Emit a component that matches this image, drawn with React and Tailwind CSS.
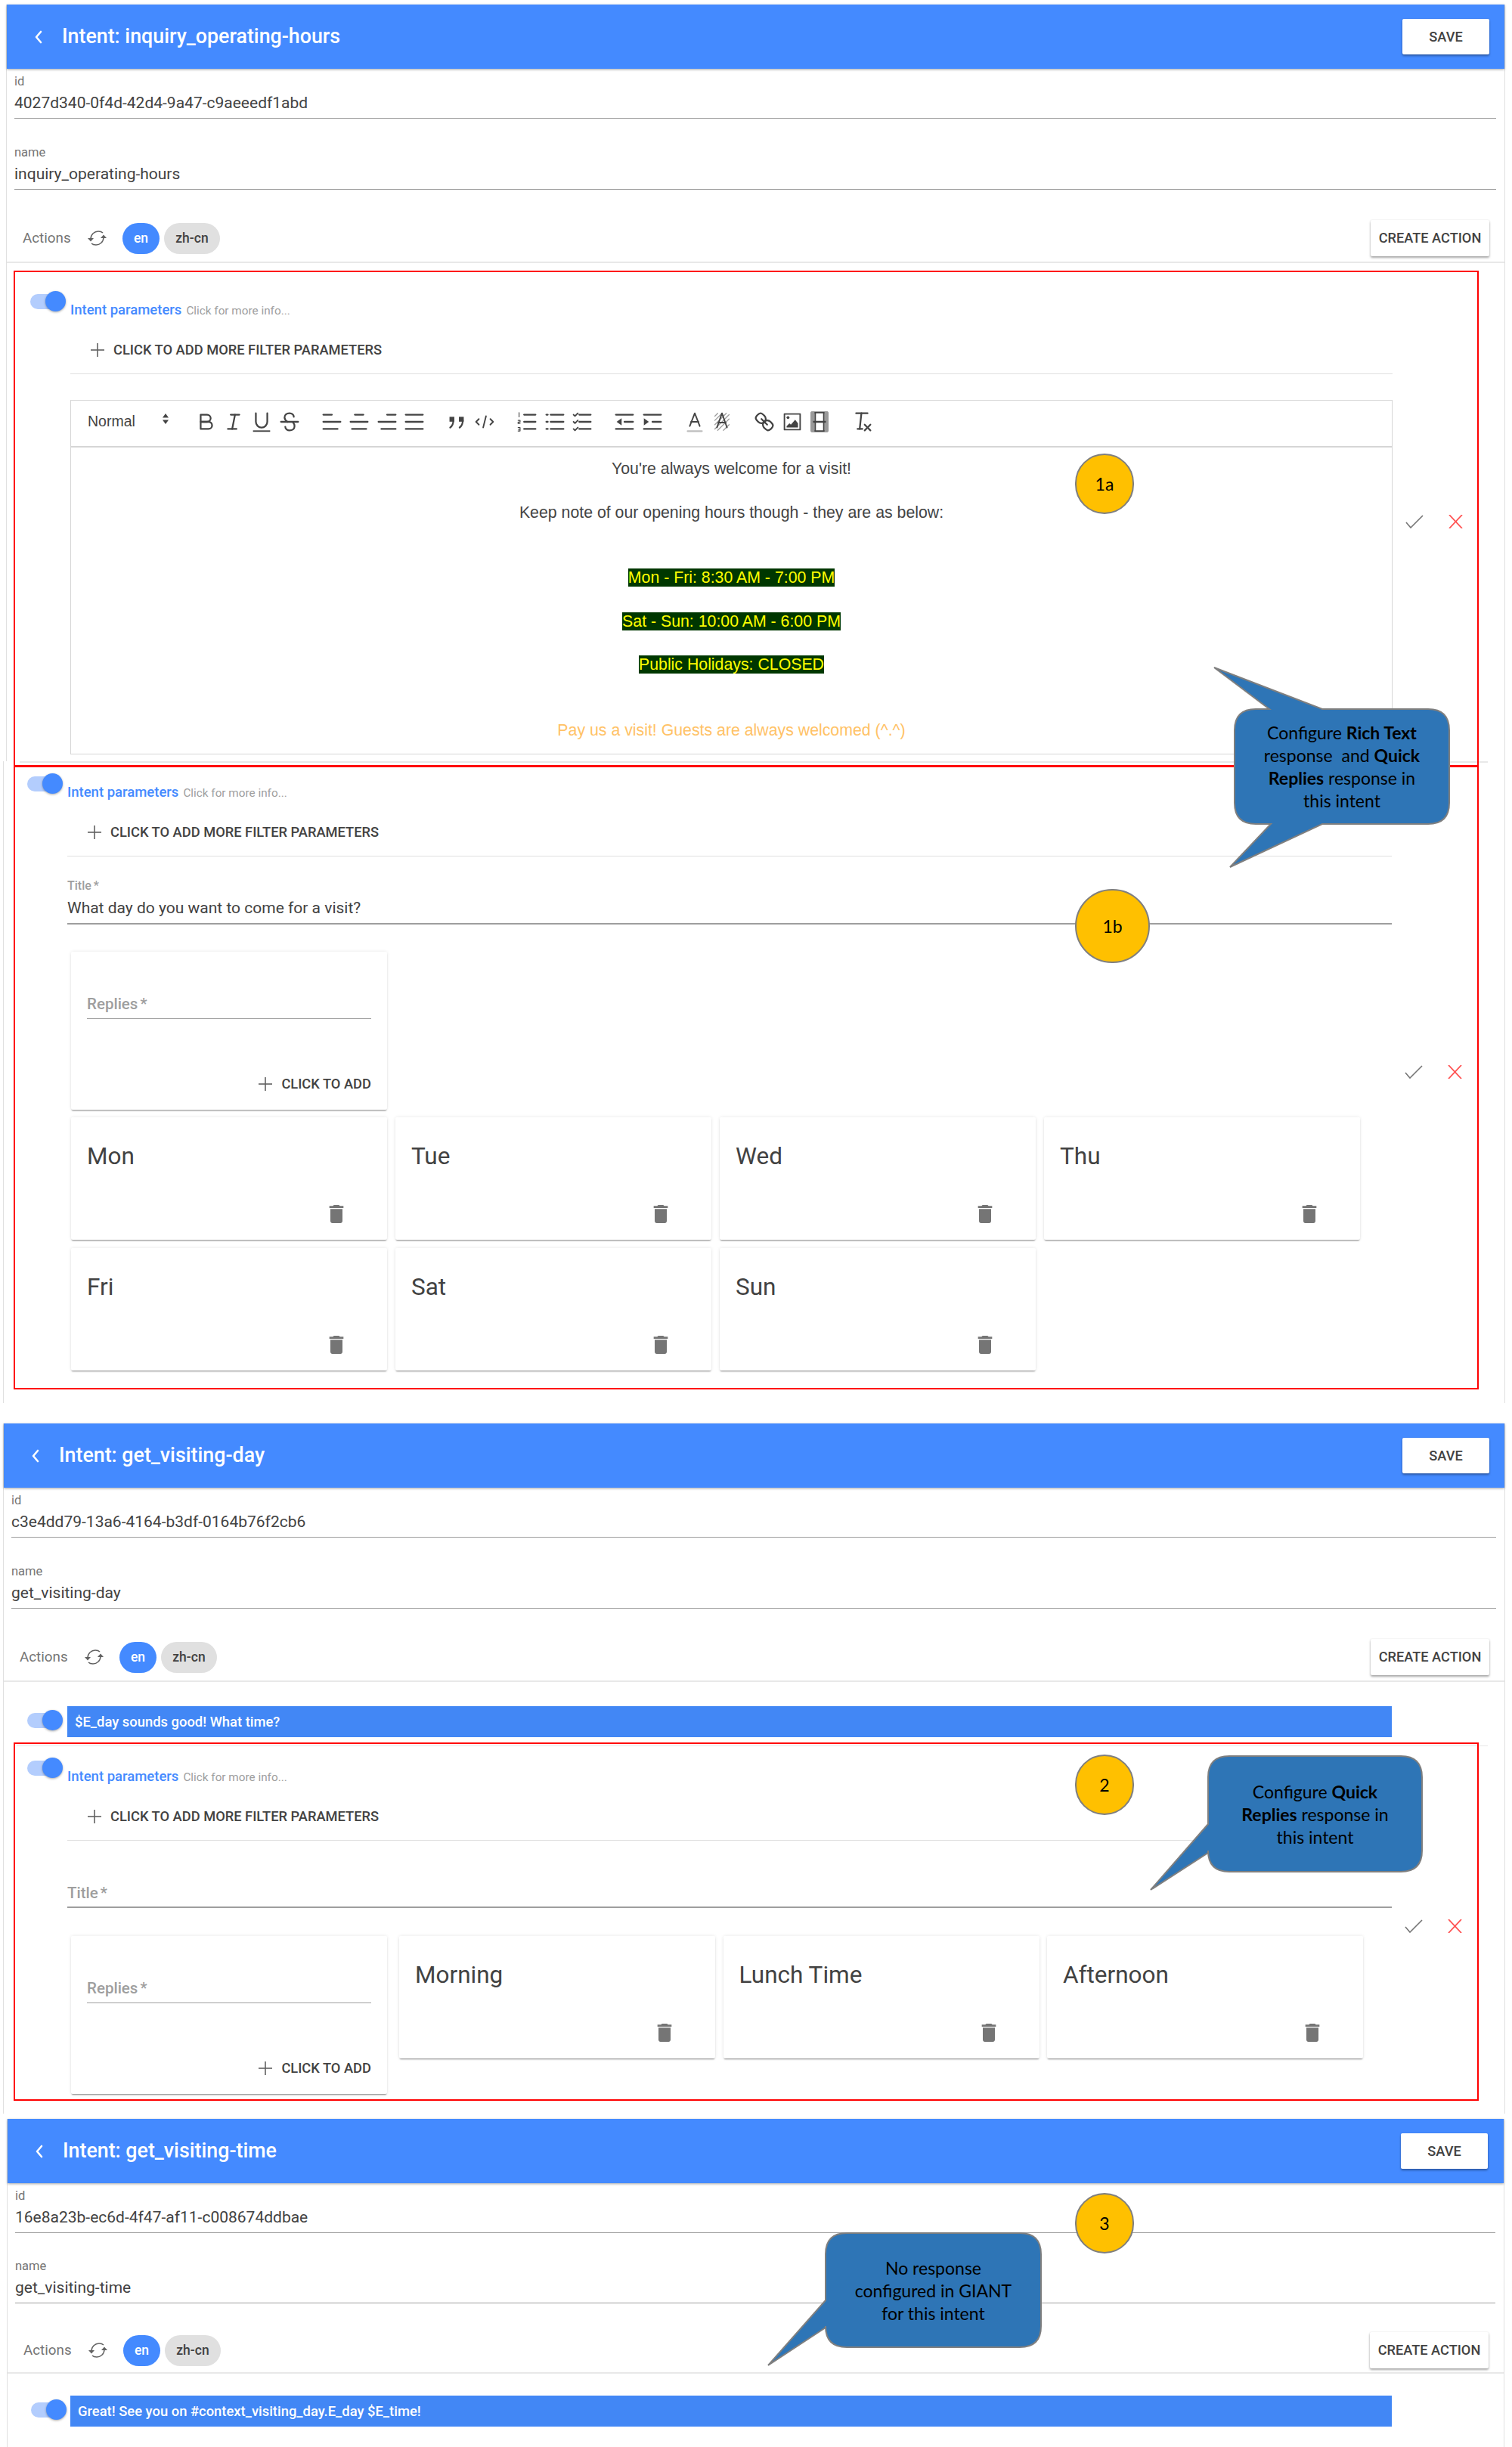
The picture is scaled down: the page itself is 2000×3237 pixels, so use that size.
const Chevron = () => (
  <svg width="14" height="20" viewBox="0 0 14 20" fill="none" stroke="#fff" strokeWidth="2.6" strokeLinecap="round" strokeLinejoin="round">
    <polyline points="10,3 4,10 10,17" />
  </svg>
);

const Plus = () => (
  <svg width="18" height="18" viewBox="0 0 18 18" stroke="#616161" strokeWidth="1.6" className="shrink-0">
    <line x1="9" y1="0" x2="9" y2="18" />
    <line x1="0" y1="9" x2="18" y2="9" />
  </svg>
);

const Refresh = () => (
  <svg width="27" height="22" viewBox="0 0 27 22" fill="none" stroke="#616161" strokeWidth="1.5" className="shrink-0">
    <path d="M5 12C5 6 10 2 15 2c3 0 5 1 6 2" />
    <path d="M22 10c0 6-5 10-10 10-3 0-5-1-6-2" />
    <path d="M1 11h8l-4 4.5z" fill="#616161" stroke="none" />
    <path d="M18 11h8l-4-4.5z" fill="#616161" stroke="none" />
  </svg>
);

const Trash = () => (
  <svg width="32" height="32" viewBox="0 0 24 24" fill="#757575">
    <path d="M6 19c0 1.1.9 2 2 2h8c1.1 0 2-.9 2-2V7H6v12zM19 4h-3.5l-1-1h-5l-1 1H5v2h14V4z" />
  </svg>
);

const Check = () => (
  <svg width="24" height="18" viewBox="0 0 24 18" fill="none" stroke="#757575" strokeWidth="1.6">
    <polyline points="1,10 7,17 23,1" />
  </svg>
);

const Cross = () => (
  <svg width="19" height="18" viewBox="0 0 19 18" fill="none" stroke="#ff5252" strokeWidth="1.8">
    <line x1="1" y1="0" x2="18" y2="18" />
    <line x1="18" y1="0" x2="1" y2="18" />
  </svg>
);

const Toggle = () => (
  <div className="relative w-[47px] h-[27px]">
    <div className="absolute left-0 top-[4px] w-[38px] h-[20px] rounded-full bg-[#b3cdfd]" />
    <div className="absolute right-0 top-0 w-[27px] h-[27px] rounded-full bg-[#448aff] shadow-[0_1px_3px_rgba(0,0,0,0.35)]" />
  </div>
);

const Btn = ({ children, className }) => (
  <div className={`flex items-center justify-center bg-white rounded-[2px] text-[18.2px] font-medium text-[#424242] shadow-[0_2px_3px_rgba(0,0,0,0.35),0_0_2px_rgba(0,0,0,0.1)] ${className}`}>
    {children}
  </div>
);

const Header = ({ title, right = "pr-[20px]" }) => (
  <div className={`flex items-center h-[85px] pl-[35px] bg-[#448aff] shadow-[0_1px_3px_rgba(0,0,0,0.35)] ${right}`}>
    <Chevron />
    <div className="ml-[24px] text-[26.8px] font-medium text-white">{title}</div>
    <Btn className="ml-auto w-[115px] h-[47px]">SAVE</Btn>
  </div>
);

const Field = ({ label, value }) => (
  <div className="border-b border-[#9e9e9e] pb-[7px]">
    <div className="h-[16px] text-[16.5px] leading-[16px] text-[#757575]">{label}</div>
    <div className="mt-[7px] h-[26px] text-[21px] leading-[26px] text-[#424242]">{value}</div>
  </div>
);

const Meta = ({ id, name, tight }) => (
  <>
    <div className="pl-[10px] pr-[11px] pt-[9px]">
      <Field label="id" value={id} />
      <div className={tight ? "mt-[36px]" : "mt-[37px]"}>
        <Field label="name" value={name} />
      </div>
    </div>
    <div className={`flex items-center h-[48px] pl-[21px] pr-[20px] ${tight ? "mt-[38px]" : "mt-[40px]"}`}>
      <span className="w-[63px] text-[18.8px] text-[#757575]">Actions</span>
      <div className="ml-[22px] mr-[20px]"><Refresh /></div>
      <div className="flex items-center justify-center w-[49px] h-[41px] rounded-full bg-[#448aff] text-[17.5px] font-medium text-white">en</div>
      <div className="flex items-center justify-center ml-[6px] w-[74px] h-[41px] rounded-full bg-[#e0e0e0] text-[17.5px] font-medium text-[#424242]">zh-cn</div>
      <Btn className="ml-auto w-[157px] h-[48px]">CREATE ACTION</Btn>
    </div>
    <div className={`h-[2px] bg-[#e8e8e8] ${tight ? "mt-[5px]" : "mt-[7px]"}`} />
  </>
);

const IntentParams = () => (
  <>
    <div className="flex items-baseline gap-[6px] mt-[14px] h-[22px] leading-[22px]">
      <span className="text-[18.5px] font-medium text-[#448aff]">Intent parameters</span>
      <span className="text-[15.3px] text-[#9e9e9e]">Click for more info...</span>
    </div>
    <div className="flex items-center h-[40px] mt-[22px] pl-[27px]">
      <Plus />
      <span className="ml-[12px] text-[18.3px] font-medium text-[#424242]">CLICK TO ADD MORE FILTER PARAMETERS</span>
    </div>
    <div className="mt-[11px] h-[1px] bg-[#e0e0e0]" />
  </>
);

const Block = ({ width, actions, children }) => (
  <div className="flex">
    <div className="w-[84px] pl-[31px]"><Toggle /></div>
    <div className={width}>
      <IntentParams />
      {children}
    </div>
    <div className={`flex items-start ml-[17px] gap-[33px] ${actions}`}>
      <Check />
      <Cross />
    </div>
  </div>
);

const ReplyCard = ({ text }) => (
  <div className="flex flex-col w-[418px] h-[162px] px-[21px] pt-[34px] bg-white rounded-[2px] shadow-[0_2px_2px_-1px_rgba(0,0,0,0.45),0_0_4px_rgba(0,0,0,0.1)]">
    <div className="h-[36px] text-[31.5px] leading-[36px] text-[#424242]">{text}</div>
    <div className="flex justify-end mt-[42px] pr-[30px]"><Trash /></div>
  </div>
);

const RepliesCard = () => (
  <div className="w-[418px] h-[209px] shrink-0 px-[21px] pt-[54px] bg-white rounded-[2px] shadow-[0_2px_2px_-1px_rgba(0,0,0,0.45),0_0_4px_rgba(0,0,0,0.1)]">
    <div className="h-[35px] pb-[4px] border-b border-[#9e9e9e] text-[20.5px] leading-[30px] font-medium text-[#9e9e9e]">Replies<span className="ml-[3px]">*</span></div>
    <div className="flex items-center justify-end h-[32px] mt-[70px]">
      <Plus />
      <span className="ml-[12px] text-[18.3px] font-medium text-[#424242]">CLICK TO ADD</span>
    </div>
  </div>
);

const icons = [
  [<><path d="M5 4h4.5a2.5 2.5 0 0 1 0 5H5z" /><path d="M5 9h5.5a2.5 2.5 0 0 1 0 5H5z" /></>,
   <><line x1="7" x2="13" y1="4" y2="4" /><line x1="5" x2="11" y1="14" y2="14" /><line x1="8" x2="10" y1="14" y2="4" /></>,
   <><path d="M5 3v6a4 4 0 0 0 4 4 4 4 0 0 0 4-4V3" /><rect x="3" y="15" width="12" height="1" fill="#444" stroke="none" /></>,
   <><line x1="3" x2="15" y1="9" y2="9" /><path d="M12 5.5C12 4 10.5 3 9 3 7 3 5.5 4.2 5.5 6c0 1.2.8 2.2 2 3" /><path d="M6 12.5c0 1.5 1.5 2.5 3 2.5 2 0 3.5-1.2 3.5-3 0-1-.4-1.9-1-2.5" /></>],
  [<><line x1="3" x2="15" y1="9" y2="9" /><line x1="3" x2="13" y1="14" y2="14" /><line x1="3" x2="9" y1="4" y2="4" /></>,
   <><line x1="3" x2="15" y1="9" y2="9" /><line x1="4" x2="14" y1="14" y2="14" /><line x1="6" x2="12" y1="4" y2="4" /></>,
   <><line x1="3" x2="15" y1="9" y2="9" /><line x1="5" x2="15" y1="14" y2="14" /><line x1="9" x2="15" y1="4" y2="4" /></>,
   <><line x1="3" x2="15" y1="9" y2="9" /><line x1="3" x2="15" y1="14" y2="14" /><line x1="3" x2="15" y1="4" y2="4" /></>],
  [<><rect x="4" y="5.5" width="3.4" height="3.4" fill="#444" stroke="none" /><rect x="10.6" y="5.5" width="3.4" height="3.4" fill="#444" stroke="none" /><path d="M6.7 8c0 2.5-.7 4-2.2 5" /><path d="M13.3 8c0 2.5-.7 4-2.2 5" /></>,
   <><polyline points="5 7 3 9 5 11" strokeWidth="1" /><polyline points="13 7 15 9 13 11" strokeWidth="1" /><line x1="10" x2="8" y1="5" y2="13" strokeWidth="1" /></>],
  [<><line x1="7" x2="15" y1="4" y2="4" /><line x1="7" x2="15" y1="9" y2="9" /><line x1="7" x2="15" y1="14" y2="14" /><path d="M3.5 2.5v3M2.8 8h1.4v1.2H2.8v1h1.4M2.8 13h1.4v2.4H2.8M3 14.2h1" strokeWidth="0.6" /></>,
   <><line x1="6" x2="15" y1="4" y2="4" /><line x1="6" x2="15" y1="9" y2="9" /><line x1="6" x2="15" y1="14" y2="14" /><line x1="3" x2="4" y1="4" y2="4" /><line x1="3" x2="4" y1="9" y2="9" /><line x1="3" x2="4" y1="14" y2="14" /></>,
   <><line x1="7" x2="15" y1="4" y2="4" /><line x1="7" x2="15" y1="9" y2="9" /><line x1="7" x2="15" y1="14" y2="14" /><polyline points="3 4 4 5 6 3" strokeWidth="1" /><polyline points="3 9 4 10 6 8" strokeWidth="1" /><polyline points="3 14 4 15 6 13" strokeWidth="1" /></>],
  [<><line x1="3" x2="15" y1="14" y2="14" /><line x1="3" x2="15" y1="4" y2="4" /><line x1="9" x2="15" y1="9" y2="9" /><polygon points="7 6.5 7 11.5 3.5 9" fill="#444" stroke="none" /></>,
   <><line x1="3" x2="15" y1="14" y2="14" /><line x1="3" x2="15" y1="4" y2="4" /><line x1="9" x2="15" y1="9" y2="9" /><polygon points="3 6.5 3 11.5 6.5 9" fill="#444" stroke="none" /></>],
  [<><line x1="4" x2="14" y1="15.5" y2="15.5" stroke="#bdbdbd" /><polyline points="5.5 12 9 3 12.5 12" strokeWidth="1" /><line x1="11.6" x2="6.4" y1="9" y2="9" strokeWidth="1" /></>,
   <><path d="M4 5l2-2M4 8l5-5M4 11l8-8M4 14l10-10M6 15l8-8M10 15l4-4" stroke="#9e9e9e" strokeWidth="0.7" /><polyline points="5.5 13 9 3 12.5 13" strokeWidth="1" /><line x1="11.6" x2="6.4" y1="9.5" y2="9.5" strokeWidth="1" /></>],
  [<><line x1="7" x2="11" y1="7" y2="11" /><path d="M8.9 4.6a3.5 3.5 0 0 1 .4 4.7 3.5 3.5 0 0 1-4.7-.4C3.2 7.5 2 6.4 4.2 4.2S7.5 3.2 8.9 4.6z" /><path d="M13.4 9.1a3.5 3.5 0 0 0-4.7-.4 3.5 3.5 0 0 0 .4 4.7c1.4 1.4 2.5 2.5 4.7.4s1.1-3.3-.4-4.7z" /></>,
   <><rect x="3.5" y="3.5" width="11" height="11" strokeWidth="1" /><circle cx="6" cy="6" r="1" fill="#444" stroke="none" /><polygon points="5 13 5 12 7 10 8 11 11 7.5 13 10 13 13" fill="#444" stroke="none" /></>,
   <><rect x="3.5" y="2.5" width="11" height="13" strokeWidth="1.2" /><rect x="3" y="2" width="2.5" height="14" fill="#999" stroke="none" /><rect x="12.5" y="2" width="2.5" height="14" fill="#999" stroke="none" /><line x1="5" x2="13" y1="9" y2="9" /><line x1="6" x2="6" y1="3" y2="15" strokeWidth="1" /><line x1="12" x2="12" y1="3" y2="15" strokeWidth="1" /></>],
  [<><line x1="5" x2="13" y1="3" y2="3" /><line x1="6" x2="9.4" y1="14" y2="14" /><line x1="8.7" x2="7.5" y1="3" y2="14" /><line x1="11" x2="15" y1="11" y2="15" /><line x1="15" x2="11" y1="11" y2="15" /></>],
];

const Toolbar = () => (
  <div className="flex items-center h-[62px] border-b-2 border-[#d6d6d6] pl-[22px] pb-[4px]">
    <span className="relative w-[103px] text-[19.5px] text-[#444] [font-family:'Liberation_Sans',sans-serif]">
      Normal
      <svg width="10" height="16" viewBox="0 0 10 16" fill="#444" className="absolute left-[98px] top-[3px]">
        <polygon points="5,1 9,6.5 1,6.5" />
        <polygon points="5,15 9,9.5 1,9.5" />
      </svg>
    </span>
    <div className="flex ml-[35.5px]">
      {icons.map((group, i) => (
        <div key={i} className="flex mr-[19.4px]">
          {group.map((icon, j) => (
            <div key={j} className="flex justify-center w-[36.6px]">
              <svg width="34" height="34" viewBox="0 0 18 18" fill="none" stroke="#444" strokeWidth="1.2" strokeLinecap="round" strokeLinejoin="round">
                {icon}
              </svg>
            </div>
          ))}
        </div>
      ))}
    </div>
  </div>
);

const Line = ({ children, className = "" }) => (
  <p className={`h-[28.8px] ${className}`}>{children}</p>
);

const Hours = ({ children }) => (
  <Line><span className="bg-[#003700] text-[#ffff00]">{children}</span></Line>
);

const Editor = () => (
  <div className="mt-[34px] h-[469px] border border-[#d6d6d6]">
    <Toolbar />
    <div className="pt-[14px] text-center text-[21.3px] leading-[28.8px] text-[#444] [font-family:'Liberation_Sans',sans-serif]">
      <Line>You're always welcome for a visit!</Line>
      <Line />
      <Line>Keep note of our opening hours though - they are as below:</Line>
      <Line />
      <Line />
      <Hours>Mon - Fri: 8:30 AM - 7:00 PM</Hours>
      <Line />
      <Hours>Sat - Sun: 10:00 AM - 6:00 PM</Hours>
      <Line />
      <Hours>Public Holidays: CLOSED</Hours>
      <Line />
      <Line />
      <Line className="text-[#ffc266]">Pay us a visit! Guests are always welcomed (^.^)</Line>
    </div>
  </div>
);

const Bar = ({ col, width, text }) => (
  <div className="flex">
    <div className={`${col} pl-[31px] pt-[5px]`}><Toggle /></div>
    <div className={`${width} flex items-center h-[41px] pl-[10px] bg-[#4287f5] text-[18.4px] font-medium text-white`}>{text}</div>
  </div>
);

const Circle = ({ className, children }) => (
  <div className={`absolute flex items-center justify-center rounded-full bg-[#ffc000] border-2 border-[#7f7f7f] text-[23px] text-black [font-family:Lato,sans-serif] ${className}`}>
    {children}
  </div>
);

const Callout = ({ box, d, view, textBox, children }) => (
  <>
    <svg className={`absolute overflow-visible ${box}`} viewBox={view} fill="#2e75b6" stroke="#7f7f7f" strokeWidth="2">
      <path d={d} />
    </svg>
    <div className={`absolute flex flex-col items-center justify-center text-[23px] leading-[30px] text-black [font-family:Lato,sans-serif] ${textBox}`}>
      {children}
    </div>
  </>
);

export default function App() {
  return (
    <div className="relative w-[2000px] h-[3237px] overflow-hidden bg-white [font-family:Roboto,sans-serif]">
      {/* intent 1, top half */}
      <div className="ml-[8px] mt-[6px] w-[1983px] h-[1001px] border-x border-[#e0e0e0]">
        <Header title="Intent: inquiry_operating-hours" />
        <Meta id="4027d340-0f4d-42d4-9a47-c9aeeedf1abd" name="inquiry_operating-hours" />
        <div className="pt-[37px]">
          <Block width="w-[1749px]" actions="pt-[296px]">
            <Editor />
          </Block>
        </div>
        <div className="ml-[17px] mt-[9px] w-[1942px] h-[2px] bg-[#e8e8e8]" />
      </div>

      {/* intent 1, quick replies */}
      <div className="ml-[4px] w-[1987px] pt-[16px] pb-[43px] border-x border-[#e0e0e0]">
        <Block width="w-[1752px]" actions="pt-[386px]">
          <div className="mt-[31px] border-b-2 border-[#9e9e9e] pb-[7px]">
            <div className="h-[16px] text-[16px] leading-[16px] font-medium text-[#9e9e9e]">Title<span className="ml-[3px]">*</span></div>
            <div className="mt-[8px] h-[26px] text-[21px] leading-[26px] text-[#424242]">What day do you want to come for a visit?</div>
          </div>
          <div className="ml-[5px] mt-[36px]">
            <RepliesCard />
            <div className="grid grid-cols-[repeat(4,418px)] gap-x-[11px] gap-y-[11px] mt-[10px]">
              {["Mon", "Tue", "Wed", "Thu", "Fri", "Sat", "Sun"].map((d) => (
                <ReplyCard key={d} text={d} />
              ))}
            </div>
          </div>
        </Block>
      </div>

      {/* intent 2 */}
      <div className="ml-[4px] mt-[27px] w-[1987px] h-[913px] border-x border-[#e0e0e0]">
        <Header title="Intent: get_visiting-day" />
        <Meta id="c3e4dd79-13a6-4164-b3df-0164b76f2cb6" name="get_visiting-day" />
        <div className="mt-[32px]">
          <Bar col="w-[84px]" width="w-[1752px]" text="$E_day sounds good! What time?" />
        </div>
        <div className="ml-[17px] mt-[11px] w-[1946px] h-[1px] bg-[#e8e8e8]" />
        <div className="pt-[15px]">
          <Block width="w-[1752px]" actions="pt-[214px]">
            <div className="mt-[54px] h-[35px] border-b-2 border-[#9e9e9e] text-[20.5px] leading-[30px] font-medium text-[#9e9e9e]">Title<span className="ml-[3px]">*</span></div>
            <div className="flex items-start ml-[5px] mt-[37px]">
              <RepliesCard />
              <div className="flex gap-[10.5px] ml-[16px]">
                {["Morning", "Lunch Time", "Afternoon"].map((d) => (
                  <ReplyCard key={d} text={d} />
                ))}
              </div>
            </div>
          </Block>
        </div>
      </div>

      {/* intent 3 */}
      <div className="ml-[9px] mt-[7px] w-[1981px] h-[434px] border-x border-[#e0e0e0]">
        <Header title="Intent: get_visiting-time" right="pr-[21px]" />
        <Meta id="16e8a23b-ec6d-4f47-af11-c008674ddbae" name="get_visiting-time" tight />
        <div className="mt-[29px]">
          <Bar col="w-[83px]" width="w-[1748px]" text="Great! See you on #context_visiting_day.E_day $E_time!" />
        </div>
      </div>

      {/* annotations drawn on top of the screenshots */}
      <div className="absolute left-[18px] top-[358px] w-[1938px] h-[656px] border-2 border-[#ff0000]" />
      <div className="absolute left-[18px] top-[1013px] w-[1938px] h-[825px] border-2 border-[#ff0000]" />
      <div className="absolute left-[18px] top-[2305px] w-[1938px] h-[474px] border-2 border-[#ff0000]" />

      <Circle className="left-[1422px] top-[600px] w-[78px] h-[80px]">1a</Circle>
      <Circle className="left-[1422px] top-[1176px] w-[99px] h-[98px]">1b</Circle>
      <Circle className="left-[1422px] top-[2321px] w-[78px] h-[80px]">2</Circle>
      <Circle className="left-[1422px] top-[2901px] w-[78px] h-[80px]">3</Circle>

      <Callout
        box="left-[1606px] top-[883px] w-[311px] h-[264px]"
        view="0 0 311 264"
        d="M55 55H73L0 0 143 55H283Q311 55 311 83V179Q311 207 283 207H143L21 264 75 207H55Q27 207 27 179V83Q27 55 55 55Z"
        textBox="left-[1633px] top-[938px] w-[284px] h-[152px]"
      >
        <div>Configure <b>Rich Text</b></div>
        <div>response&nbsp; and <b>Quick</b></div>
        <div><b>Replies</b> response in</div>
        <div>this intent</div>
      </Callout>
      <Callout
        box="left-[1522px] top-[2323px] w-[359px] h-[177px]"
        view="0 0 359 177"
        d="M104 0H331Q359 0 359 28V125Q359 153 331 153H104Q76 153 76 125V128L0 177 76 90V28Q76 0 104 0Z"
        textBox="left-[1598px] top-[2323px] w-[283px] h-[153px]"
      >
        <div>Configure <b>Quick</b></div>
        <div><b>Replies</b> response in</div>
        <div>this intent</div>
      </Callout>
      <Callout
        box="left-[1016px] top-[2954px] w-[361px] h-[175px]"
        view="0 0 361 175"
        d="M104 0H333Q361 0 361 28V123Q361 151 333 151H104Q76 151 76 123V125L0 175 76 89V28Q76 0 104 0Z"
        textBox="left-[1092px] top-[2954px] w-[285px] h-[151px]"
      >
        <div>No response</div>
        <div>configured in GIANT</div>
        <div>for this intent</div>
      </Callout>
    </div>
  );
}
